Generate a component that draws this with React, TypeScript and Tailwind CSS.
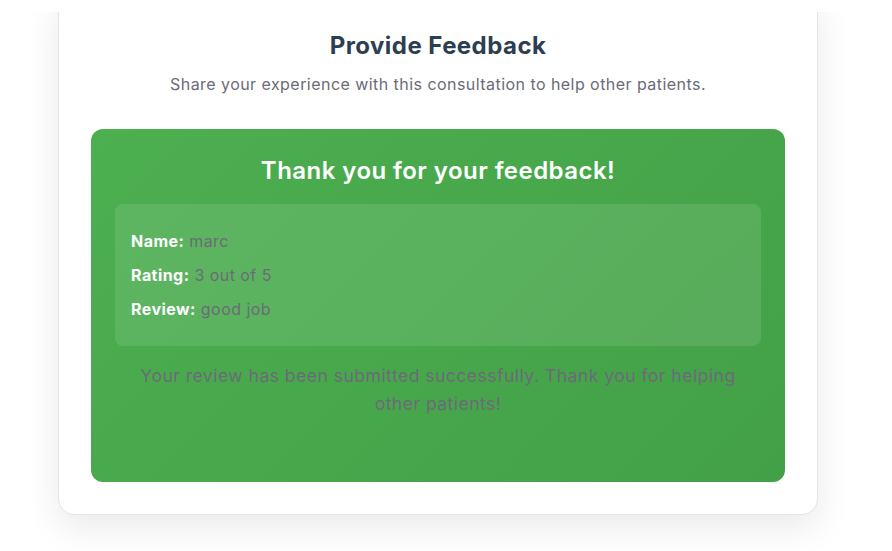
import React from "react";

const entries = [
  { label: "Name:", value: "marc" },
  { label: "Rating:", value: "3 out of 5" },
  { label: "Review:", value: "good job" },
];

export default function App() {
  return (
    <div
      className="h-screen flex flex-col bg-white text-[#666] tracking-[0.45px]"
      style={{ fontFamily: "Inter, 'Open Sans', sans-serif" }}
    >
      <div className="h-3 shrink-0 bg-white" />
      <main className="flex-1 overflow-hidden pl-[58px]">
        <section className="-mt-[20px] w-[760px] rounded-2xl border border-[#e3e4ea] bg-white px-8 pt-[37px] pb-8 shadow-[0_12px_36px_rgba(0,0,0,0.09)]">
          <h2 className="text-center text-2xl leading-8 font-bold text-[#2c3e50]">
            Provide Feedback
          </h2>
          <p className="mt-[10px] text-center text-base leading-6 text-[#6b6b78]">
            Share your experience with this consultation to help other patients.
          </p>

          <div className="mt-[33px] rounded-xl bg-[linear-gradient(135deg,#4caf50,#43a047)] px-6 pt-[27px] pb-[64px]">
            <h3 className="text-center text-2xl leading-[30px] font-semibold text-white">
              Thank you for your feedback!
            </h3>
            <div className="mt-[18px] rounded-lg bg-white/10 px-4 py-[15px]">
              {entries.map((e) => (
                <p key={e.label} className="my-[10px] text-base leading-6 text-[#6b6b78]">
                  <strong className="font-bold text-white">{e.label}</strong> {e.value}
                </p>
              ))}
            </div>
            <p className="mx-auto mt-4 max-w-[608px] text-center text-[17.6px] leading-[28px] text-[#6b6b78]">
              Your review has been submitted successfully. Thank you for helping other patients!
            </p>
          </div>
        </section>
      </main>
    </div>
  );
}
